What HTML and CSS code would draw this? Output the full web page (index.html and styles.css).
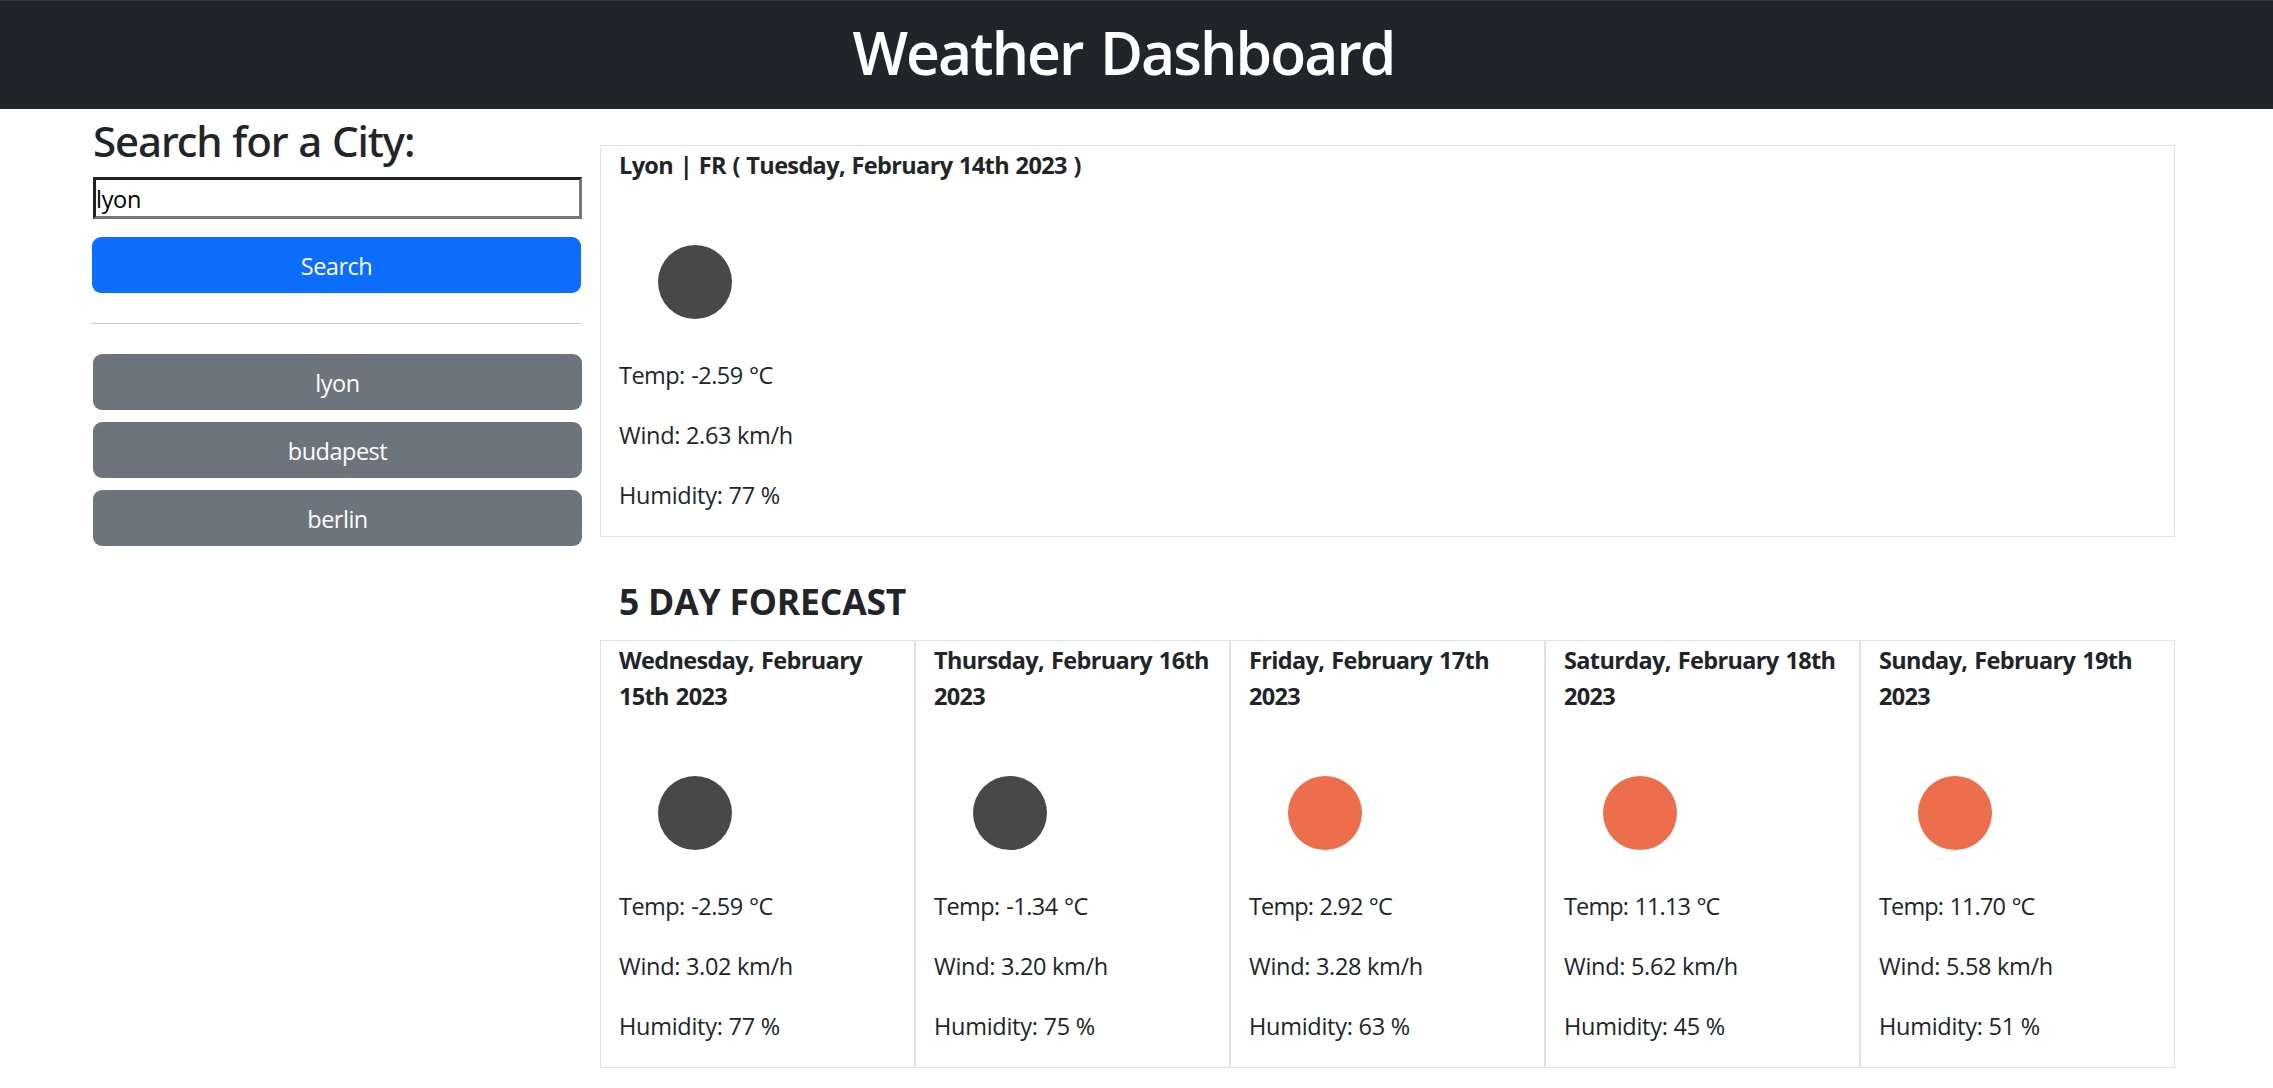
FILE: index.html
```html
<!DOCTYPE html>
<html lang="en">
<head>
<meta charset="utf-8">
<title>Weather Dashboard</title>
<link rel="stylesheet" href="styles.css">
</head>
<body>
<header class="header"><h1 class="title">Weather Dashboard</h1></header>
<main class="layout">
  <aside class="sidebar">
    <h2 class="label">Search for a City:</h2>
    <input class="city" type="text" value="lyon">
    <button class="btn btn-primary">Search</button>
    <hr class="rule">
    <div class="history">
      <button class="btn">lyon</button>
      <button class="btn">budapest</button>
      <button class="btn">berlin</button>
    </div>
  </aside>
  <div class="content">
    <section class="card today">
      <p class="date">Lyon | FR ( Tuesday, February 14th 2023 )</p>
      <svg class="icon night" viewBox="0 0 150 150"><circle cx="75" cy="75" r="37"/></svg>
      <p class="temp below-zero">Temp: -2.59 °C</p>
      <p class="wind">Wind: 2.63 km/h</p>
      <p class="humidity">Humidity: 77 %</p>
    </section>
    <h3 class="forecast-title">5 DAY FORECAST</h3>
    <section class="forecast">
      <div class="card">
        <p class="date">Wednesday, February 15th 2023</p>
        <svg class="icon night" viewBox="0 0 150 150"><circle cx="75" cy="75" r="37"/></svg>
        <p class="temp below-zero">Temp: -2.59 °C</p>
        <p class="wind">Wind: 3.02 km/h</p>
        <p class="humidity">Humidity: 77 %</p>
      </div>
      <div class="card">
        <p class="date">Thursday, February 16th 2023</p>
        <svg class="icon night" viewBox="0 0 150 150"><circle cx="75" cy="75" r="37"/></svg>
        <p class="temp below-zero">Temp: -1.34 °C</p>
        <p class="wind">Wind: 3.20 km/h</p>
        <p class="humidity">Humidity: 75 %</p>
      </div>
      <div class="card">
        <p class="date">Friday, February 17th 2023</p>
        <svg class="icon day" viewBox="0 0 150 150"><circle cx="75" cy="75" r="37"/></svg>
        <p class="temp">Temp: 2.92 °C</p>
        <p class="wind">Wind: 3.28 km/h</p>
        <p class="humidity">Humidity: 63 %</p>
      </div>
      <div class="card">
        <p class="date">Saturday, February 18th 2023</p>
        <svg class="icon day" viewBox="0 0 150 150"><circle cx="75" cy="75" r="37"/></svg>
        <p class="temp">Temp: 11.13 °C</p>
        <p class="wind">Wind: 5.62 km/h</p>
        <p class="humidity">Humidity: 45 %</p>
      </div>
      <div class="card">
        <p class="date">Sunday, February 19th 2023</p>
        <svg class="icon day" viewBox="0 0 150 150"><circle cx="75" cy="75" r="37"/></svg>
        <p class="temp">Temp: 11.70 °C</p>
        <p class="wind">Wind: 5.58 km/h</p>
        <p class="humidity">Humidity: 51 %</p>
      </div>
    </section>
  </div>
</main>
</body>
</html>
```
FILE: styles.css
```css
* { box-sizing: border-box; }
body { margin: 0; min-height: 1088px; background: #fff; color: #212529; font-family: "Open Sans", "Noto Sans", sans-serif; font-size: 23.5px; line-height: 36px; }
p, h1, h2, h3 { margin: 0; }
.header { height: 109px; border-top: 1px solid #37383a; background: #212529; color: #fff; text-align: center; }
.title { padding: 15px 26px 0 0; font-size: 58.8px; line-height: 72px; font-weight: 600; letter-spacing: -1.9px; word-spacing: 4px; }
.layout { display: flex; gap: 18px; padding-left: 92px; }
.sidebar { flex: none; width: 490px; padding-top: 8px; }
.label { padding-left: 1px; font-family: "Noto Sans", "Open Sans", sans-serif; font-size: 42px; line-height: 48px; font-weight: 500; letter-spacing: -1.1px; word-spacing: 1px; }
.city { display: block; width: 489px; height: 42px; margin: 12px 0 18px 1px; padding: 2px 0 0; border: 3px inset #767676; font: inherit; letter-spacing: -0.3px; color: #000; }
.btn { display: block; width: 489px; height: 56px; padding: 2px 0 0; border: 0; border-radius: 9px; background: #6c757d; color: #fff; font: inherit; letter-spacing: -0.5px; text-align: center; }
.btn-primary { background: #0d6efd; }
.rule { width: 489px; height: 1px; margin: 30px 0; border: 0; background: #c8c9ca; }
.history { display: grid; gap: 12px; padding-left: 1px; }
.content { flex: none; width: 1575px; padding-top: 36px; }
.card { border: 1px solid #dee2e6; padding: 0 18px; }
.card p { margin-bottom: 24px; }
.card .date { margin: 1px 0 0; font-weight: 700; letter-spacing: -0.65px; word-spacing: 1.2px; }
.forecast .date { margin-right: -10px; word-spacing: 1.5px; }
.card .humidity { margin-bottom: 0; }
.temp { letter-spacing: -0.85px; word-spacing: 1px; }
.below-zero { letter-spacing: -0.55px; }
.wind { letter-spacing: -0.3px; }
.humidity { letter-spacing: -0.27px; }
.today { height: 392px; }
.icon { display: block; width: 150px; height: 150px; margin: 24px 0 0 1px; }
.night { fill: #484849; }
.day { fill: #ec6e4c; }
.forecast-title { padding: 42px 0 17px 19px; font-size: 35.5px; line-height: 44px; font-weight: 700; letter-spacing: -0.2px; }
.forecast { display: grid; grid-template-columns: repeat(5, 315px); height: 428px; }
```
